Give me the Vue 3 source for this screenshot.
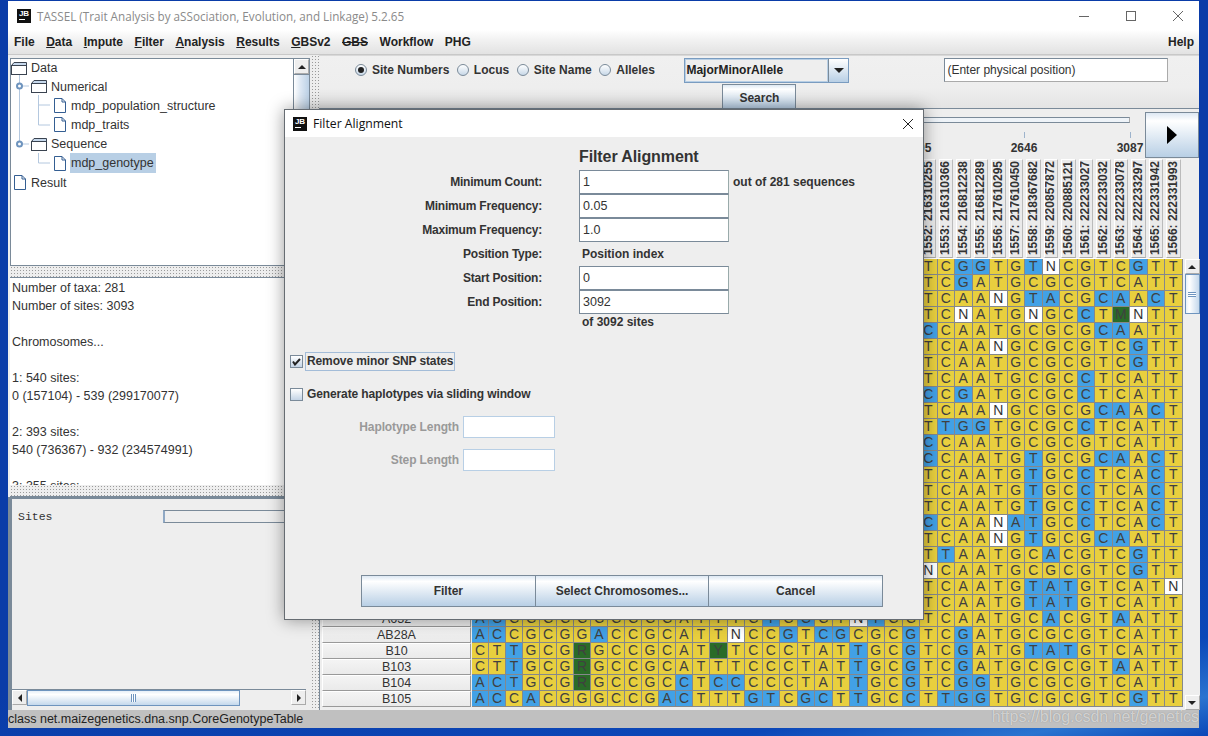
<template>
  <div class="desktop">
    <div class="window">
      <header class="titlebar">
        <span class="jb"><b>JB</b><i></i></span>
        <span class="title-text">TASSEL (Trait Analysis by aSSociation, Evolution, and Linkage) 5.2.65</span>
        <div class="win-controls">
          <svg width="12" height="12" viewBox="0 0 12 12"><path d="M1 6.5H11" stroke="#666" fill="none" /></svg>
          <svg width="12" height="12" viewBox="0 0 12 12"><rect x="1.5" y="1.5" width="9" height="9" stroke="#666" fill="none" /></svg>
          <svg width="12" height="12" viewBox="0 0 12 12"><path d="M1 1L11 11M11 1L1 11" stroke="#666" fill="none" /></svg>
        </div>
      </header>

      <nav class="menubar">
        <span>File</span>
        <span><u>D</u>ata</span>
        <span><u>I</u>mpute</span>
        <span><u>F</u>ilter</span>
        <span><u>A</u>nalysis</span>
        <span><u>R</u>esults</span>
        <span><u>G</u>BSv2</span>
        <span class="strike">GBS</span>
        <span>Workflow</span>
        <span>PHG</span>
        <span class="help">Help</span>
      </nav>

      <div class="main">
        <aside class="left">
          <div class="tree-pane">
            <div class="tree">
              <svg class="tree-lines" width="60" height="130">
                <path d="M8.5 16V27M8.5 27H18M8.5 85H18M8.5 27V85M27.5 36V66M27.5 46H39M27.5 66H39M27.5 94V104M27.5 104H39" stroke="#B4C8DF" fill="none" />
                <circle cx="8.5" cy="27" r="2.5" fill="#fff" stroke="#6E94BE" stroke-width="2" />
                <circle cx="8.5" cy="85" r="2.5" fill="#fff" stroke="#6E94BE" stroke-width="2" />
              </svg>
              <div v-for="node in treeNodes" :key="node.label" class="tree-row" :class="'lv' + node.level">
                <svg v-if="node.folder" class="tree-icon" width="16" height="13" viewBox="0 0 16 13">
                  <path d="M.5 3.5L3 .5H15.5V3.5Z" fill="#C6D8EC" stroke="#3A4350" />
                  <rect x=".5" y="3.5" width="15" height="9" fill="#fff" stroke="#3A4350" />
                </svg>
                <svg v-else class="tree-icon" width="14" height="15" viewBox="0 0 14 15">
                  <path d="M1.5 .5H9L12.5 4V14.5H1.5ZM9 .5V4H12.5" fill="#fff" stroke="#345E92" />
                </svg>
                <span class="tree-label" :class="{ selected: node.selected }">{{ node.label }}</span>
              </div>
            </div>
            <div class="vscroll-small">
              <div class="arrow-btn"><span class="tri-up"></span></div>
              <div class="thumb-v"></div>
            </div>
          </div>
          <div class="hsplit"></div>
          <div class="info-pane">
            <div v-for="(line, i) in infoLines" :key="i" class="info-line">{{ line }}</div>
          </div>
          <div class="hsplit"></div>
          <div class="sites-pane">
            <div class="sites-row">
              <span class="sites-label">Sites</span>
              <div class="progress"></div>
            </div>
            <div class="hscroll">
              <div class="arrow-btn"><span class="tri-left"></span></div>
              <div class="thumb-h"><span class="grip"></span></div>
              <div class="track-h"></div>
              <div class="arrow-btn"><span class="tri-right"></span></div>
            </div>
          </div>
        </aside>

        <div class="vsplit"></div>

        <section class="right">
          <div class="toolbar">
            <div class="radios">
              <label class="radio checked"><i></i>Site Numbers</label>
              <label class="radio"><i></i>Locus</label>
              <label class="radio"><i></i>Site Name</label>
              <label class="radio"><i></i>Alleles</label>
            </div>
            <div class="combo-col">
              <div class="combo">
                <span class="combo-text">MajorMinorAllele</span>
                <span class="combo-btn"><span class="tri-down"></span></span>
              </div>
              <button class="btn search">Search</button>
            </div>
            <div class="pos-field">(Enter physical position)</div>
          </div>

          <div class="slider-row">
            <div class="slider">
              <div class="track"></div>
              <div class="ticks">
                <div v-for="t in ticks" :key="t" class="tick"><i></i><b>{{ t }}</b></div>
              </div>
            </div>
            <button class="btn next"><span class="tri-next"></span></button>
          </div>

          <div class="table">
            <div class="table-left">
              <div class="corner"></div>
              <div v-for="(name, i) in rowNames" :key="i" class="row-head"><span>{{ name }}</span></div>
            </div>
            <div class="table-main">
              <div class="head-grid">
                <div v-for="(label, i) in headLabels" :key="i" class="col-head"><span>{{ label }}</span></div>
              </div>
              <div class="cell-grid">
                <template v-for="(row, r) in rows" :key="r">
                  <div v-for="(ch, c) in row" :key="c" class="cell" :class="cellClass(ch)">{{ ch.toUpperCase() }}</div>
                </template>
              </div>
            </div>
            <div class="table-scroll">
              <div class="spacer"></div>
              <div class="arrow-btn big"><span class="tri-up"></span></div>
              <div class="thumb-v2"><span class="grip-h"></span></div>
              <div class="track-v"></div>
              <div class="arrow-btn big"><span class="tri-down"></span></div>
            </div>
          </div>
        </section>
      </div>

      <footer class="status">class net.maizegenetics.dna.snp.CoreGenotypeTable</footer>

      <div class="dialog">
        <div class="dlg-title">
          <span class="jb"><b>JB</b><i></i></span>
          <span class="dlg-title-text">Filter Alignment</span>
          <svg class="dlg-close" width="12" height="12" viewBox="0 0 12 12"><path d="M1 1L11 11M11 1L1 11" stroke="#222" fill="none" /></svg>
        </div>
        <div class="dlg-body">
          <div class="form">
            <span></span><h2>Filter Alignment</h2><span></span>
            <label>Minimum Count:</label><div class="field">1</div><span class="note">out of 281 sequences</span>
            <label>Minimum Frequency:</label><div class="field">0.05</div><span></span>
            <label>Maximum Frequency:</label><div class="field">1.0</div><span></span>
            <label>Position Type:</label><span class="plain">Position index</span><span></span>
            <label>Start Position:</label><div class="field">0</div><span></span>
            <label>End Position:</label><div class="field">3092</div><span></span>
            <span></span><span class="plain last">of 3092 sites</span><span></span>
          </div>

          <div class="check-row first">
            <span class="check"><svg width="9" height="9" viewBox="0 0 9 9"><path d="M1 4.5L3 7.5L8 2" stroke="#222" stroke-width="2" fill="none" /></svg></span>
            <span class="check-label focused">Remove minor SNP states</span>
          </div>
          <div class="check-row second">
            <span class="check"></span>
            <span class="check-label">Generate haplotypes via sliding window</span>
          </div>

          <div class="hap-form">
            <label>Haplotype Length</label><div class="hap-field"></div>
            <label>Step Length</label><div class="hap-field"></div>
          </div>

          <div class="dlg-buttons">
            <button class="btn">Filter</button>
            <button class="btn">Select Chromosomes...</button>
            <button class="btn">Cancel</button>
          </div>
        </div>
      </div>

      <div class="watermark">https://blog.csdn.net/genetics</div>
    </div>
  </div>
</template>

<script setup>
const treeNodes = [
  { label: 'Data', level: 0, folder: true },
  { label: 'Numerical', level: 1, folder: true },
  { label: 'mdp_population_structure', level: 2 },
  { label: 'mdp_traits', level: 2 },
  { label: 'Sequence', level: 1, folder: true },
  { label: 'mdp_genotype', level: 2, selected: true },
  { label: 'Result', level: 0 }
]

const infoLines = [
  'Number of taxa: 281',
  'Number of sites: 3093',
  '',
  'Chromosomes...',
  '',
  '1: 540 sites:',
  '0 (157104) - 539 (299170077)',
  '',
  '2: 393 sites:',
  '540 (736367) - 932 (234574991)',
  '',
  '3: 355 sites:'
]

const ticks = [2205, 2646, 3087]

// only the last 15 columns of these rows stick out from under the dialog
const visibleTail = [
  'TCggTGtNCGTCgTT',
  'TCgATGCGCGTCATT',
  'TCAANGtaCGcaAcT',
  'TCNATGNGCcTMNTT',
  'cCAATGCGCGcaATT',
  'TCAANGCGCGTCgTT',
  'TCAATGCGCGTCgTT',
  'TCAATGCGCcTCATT',
  'cCgATGCGCcTCATT',
  'TCAANGCGCGcaAcT',
  'TtggTGCGCcTCATT',
  'cCAATGCGCGTCATT',
  'cCAATGtGCGcaAcT',
  'TCAATGtGCcTCAcT',
  'TCAATGtGCcTCAcT',
  'TCAATGtGCcTCAcT',
  'cCAANatGCcTCAcT',
  'TCAANGtGCGcaATT',
  'TtAATGCaCGTCgTT',
  'NCAATGCGCGTCgTT',
  'TCAATGtatGTCATN',
  'TCAATGtatGTCATT'
]

const rows = [
  ...visibleTail.map(s => s.padStart(41, 'C')),
  'acCCCCCCCCCCAT' + 'TTCtCcCTNtCC' + 'TCAATGCaCGTaATT',
  'acCGCGGaCCGCAT' + 'TNCCgTcgCGCg' + 'TCgATGCGCGTCATT',
  'CTtGCGRGCCGCAT' + 'YTCCCTATtGCg' + 'TCgATGtatGTCATT',
  'CTtGCGRGCCGCAT' + 'TTCCCTATtGCg' + 'TCgATGCGCGTaATT',
  'actGCGRGCCGCcT' + 'ccCCCTATtGCg' + 'TCggTGCGCGTCATT',
  'acCaCGGGCCGacT' + 'TTgtCgcTtGCc' + 'TtggTGCGCGTCgTT'
]

const rowNames = [...Array(22).fill(''), 'A632', 'AB28A', 'B10', 'B103', 'B104', 'B105']

const tailHeads = [
  '1552: 216310255', '1553: 216310366', '1554: 216812238', '1555: 216812289', '1556: 217610295',
  '1557: 217610450', '1558: 218367682', '1559: 220857872', '1560: 220885121', '1561: 222233027',
  '1562: 222233032', '1563: 222233078', '1564: 222233297', '1565: 222331942', '1566: 222331993'
]
const headLabels = [...Array(26).fill(''), ...tailHeads]

const cellClass = (ch) => {
  if (ch === 'N') return 'white'
  if (ch === 'R' || ch === 'Y' || ch === 'M') return 'green'
  return ch === ch.toLowerCase() ? 'blue' : 'yellow'
}
</script>

<style>
html, body { margin: 0; background: #0a3ca8; }
</style>

<style scoped>
.desktop {
  width: 1208px;
  height: 736px;
  box-sizing: border-box;
  padding: 1px 9px 8px 8px;
  background: linear-gradient(168deg, #0a3ca8 70%, #0b47b8 90%, #2a74d0 96%, #0b47b8 100%);
  overflow: hidden;
  font-family: "Liberation Sans", Arial, sans-serif;
  font-size: 12px;
  color: #333;
}
.window {
  position: relative;
  height: 727px;
  display: flex;
  flex-direction: column;
  background: #eee;
}

.titlebar {
  height: 29px;
  flex: none;
  background: #fff;
  display: flex;
  align-items: center;
  padding-left: 9px;
}
.jb {
  width: 14px;
  height: 14px;
  flex: none;
  background: #111;
  color: #fff;
  display: flex;
  flex-direction: column;
  align-items: center;
  overflow: hidden;
}
.jb b {
  font-size: 8px;
  line-height: 9px;
  letter-spacing: -.2px;
}
.jb i {
  width: 6px;
  height: 1px;
  margin: 1px 0 0 -5px;
  background: #fff;
}
.title-text {
  margin-left: 6px;
  font-family: "Open Sans", "Noto Sans", sans-serif;
  font-size: 11.7px;
  color: #8a8a8a;
}
.win-controls {
  margin-left: auto;
  display: flex;
  gap: 35px;
  padding-right: 15px;
}

.menubar {
  height: 25px;
  flex: none;
  display: flex;
  align-items: center;
  gap: 11.5px;
  padding: 0 5px 0 6px;
  box-sizing: border-box;
  font-weight: bold;
  color: #222;
  background: linear-gradient(#fff, #f2f2f2 40%, #e2e2e2);
  border-bottom: 1px solid #c8c8c8;
}
.strike { text-decoration: line-through; }
.help { margin-left: auto; }

.main {
  flex: 1;
  min-height: 0;
  display: flex;
}
.left {
  width: 302px;
  flex: none;
  padding: 3px 0 0 2px;
  box-sizing: border-box;
  display: flex;
  flex-direction: column;
}
.tree-pane {
  height: 208px;
  flex: none;
  display: flex;
  border: 1px solid #7a8a99;
  box-sizing: border-box;
  background: #fff;
}
.tree {
  position: relative;
  flex: 1;
}
.tree-lines {
  position: absolute;
  left: 0;
  top: 0;
}
.tree-row {
  position: relative;
  height: 19.2px;
  display: flex;
  align-items: center;
  font-size: 12.5px;
}
.tree-row:first-of-type { height: 18px; }
.lv1 { padding-left: 20px; }
.lv2 { padding-left: 42px; }
.tree-row:last-child { padding-left: 2px; }
.tree-icon { flex: none; }
.tree-label {
  margin-left: 3px;
  padding: 3px 2px 3px 1px;
}
.tree-label.selected { background: #b8cfe5; }

.vscroll-small {
  width: 15px;
  flex: none;
  display: flex;
  flex-direction: column;
  border-left: 1px solid #7a8a99;
  background: #eee;
}
.arrow-btn {
  width: 15px;
  height: 15px;
  flex: none;
  box-sizing: border-box;
  display: flex;
  align-items: center;
  justify-content: center;
  background: #eee;
  border: 1px solid #fff;
  border-right-color: #aaa;
  border-bottom-color: #aaa;
}
.tri-up, .tri-down, .tri-left, .tri-right {
  width: 0;
  height: 0;
  border: 4px solid transparent;
}
.tri-up { border-bottom: 4px solid #222; border-top: 0; }
.tri-down { border-top: 4px solid #222; border-bottom: 0; }
.tri-left { border-right: 4px solid #222; border-left: 0; }
.tri-right { border-left: 4px solid #222; border-right: 0; }
.thumb-v {
  flex: 1;
  background: linear-gradient(90deg, #fff, #dfe9f4 40%, #bcd1e6);
  border-top: 1px solid #7a8a99;
}

.hsplit {
  height: 12px;
  flex: none;
  box-sizing: border-box;
  background-color: #eee;
  background-image: radial-gradient(#9a9a9a 0.6px, transparent 0.8px);
  background-size: 3px 3px;
  background-position: 0 3px;
  border-bottom: 1px solid #7a8a99;
}
.info-pane {
  height: 207px;
  flex: none;
  box-sizing: border-box;
  overflow: hidden;
  background: #fff;
  padding: 1px 0 0 2px;
  font-size: 12.5px;
}
.info-line {
  height: 18px;
  line-height: 18px;
}
.sites-pane {
  flex: 1;
  min-height: 0;
  margin-left: -2px;
  display: flex;
  flex-direction: column;
  border-top: 2px solid #7a8a99;
  border-left: 4px solid #7a8a99;
}
.sites-row {
  flex: 1;
  display: flex;
  align-items: flex-start;
  padding: 11px 0 0 6px;
  overflow: hidden;
}
.sites-label {
  width: 145px;
  flex: none;
  font-family: "Liberation Mono", monospace;
  font-size: 11.5px;
  line-height: 14px;
}
.progress {
  width: 300px;
  height: 13px;
  flex: none;
  box-sizing: border-box;
  border: 1px solid #7a8a99;
  border-left: 2px solid #8fa8c4;
}
.hscroll {
  height: 16px;
  flex: none;
  display: flex;
  border-top: 1px solid #7a8a99;
  margin: 0 4px 4px 0;
}
.thumb-h {
  width: 213px;
  flex: none;
  box-sizing: border-box;
  display: flex;
  align-items: center;
  justify-content: center;
  border: 1px solid #6e94be;
  background: linear-gradient(#e8f0f8, #fff 25%, #c4d8ec);
}
.grip {
  width: 5px;
  height: 8px;
  background: repeating-linear-gradient(90deg, #6e94be 0 1px, #fff 1px 2px);
}
.track-h {
  flex: 1;
  background: #eee;
}

.vsplit {
  width: 8px;
  flex: none;
  margin-left: 1px;
  background-color: #eee;
  background-image: radial-gradient(#9a9a9a 0.6px, transparent 0.8px);
  background-size: 3px 3px;
}

.right {
  flex: 1;
  min-width: 0;
  display: flex;
  flex-direction: column;
  font-weight: bold;
}
.toolbar {
  height: 54px;
  flex: none;
  box-sizing: border-box;
  display: flex;
  align-items: flex-start;
  padding: 2px 0 0 36px;
  background: linear-gradient(#f0f0f0, #eee 60%, #e4e4e4);
  border-bottom: 1px solid #7a8a99;
  border-top: 1px solid #d8d8d8;
}
.radios {
  display: flex;
  gap: 7.5px;
  height: 24px;
  align-items: center;
}
.radio {
  display: flex;
  align-items: center;
  gap: 5px;
}
.radio i {
  width: 12px;
  height: 12px;
  box-sizing: border-box;
  border-radius: 50%;
  border: 1px solid #7a8a99;
  background: linear-gradient(#fff, #c8d8e8);
  display: block;
  position: relative;
}
.radio.checked i::after {
  content: "";
  position: absolute;
  left: 2px;
  top: 2px;
  width: 6px;
  height: 6px;
  border-radius: 50%;
  background: #222;
}
.combo-col {
  margin-left: 29.5px;
  width: 165px;
  flex: none;
  display: flex;
  flex-direction: column;
  align-items: flex-start;
  gap: 1px;
}
.combo {
  width: 165px;
  height: 25px;
  box-sizing: border-box;
  display: flex;
  border: 1px solid #7a9cc0;
  background: #eee;
}
.combo-text {
  flex: 1;
  line-height: 21px;
  padding-left: 0;
  border: 1px solid #b8cfe5;
  color: #222;
}
.combo-btn {
  width: 19px;
  flex: none;
  display: flex;
  align-items: center;
  justify-content: center;
  border-left: 1px solid #7a8a99;
  background: linear-gradient(#fff, #b8cfe5);
}
.combo-btn .tri-down { border-width: 5px 5px 0; border-top-color: #222; }
.btn {
  margin: 0;
  padding: 0;
  box-sizing: border-box;
  border: 1px solid #7a8a99;
  border-radius: 0;
  background: linear-gradient(#dde8f3, #fff 18%, #b8cfe5);
  font-family: inherit;
  font-size: 12px;
  font-weight: bold;
  color: #333;
}
.search {
  width: 74px;
  height: 25px;
  margin-left: 38px;
  padding-top: 2px;
}
.pos-field {
  margin-left: 95px;
  width: 224px;
  height: 24px;
  box-sizing: border-box;
  border: 1px solid #7a8a99;
  border-right-color: #aaa;
  border-bottom-color: #aaa;
  background: #fff;
  padding-left: 2px;
  line-height: 22px;
  font-weight: normal;
}

.slider-row {
  height: 49px;
  flex: none;
  display: flex;
  padding-top: 3px;
  box-sizing: border-box;
}
.slider {
  flex: 1;
  min-width: 0;
}
.track {
  height: 6px;
  margin: 5px 15px 0 0;
  box-sizing: border-box;
  border: 1px solid #7a8a99;
  border-right-color: #a8a8a8;
  background: #eef3f8;
}
.ticks {
  display: flex;
  justify-content: flex-end;
  gap: 76px;
  margin-top: 9px;
}
.tick {
  width: 30px;
  text-align: center;
}
.tick i {
  display: block;
  width: 1px;
  height: 6px;
  margin: 0 auto 3px;
  background: #9db3cc;
}
.tick b {
  font-size: 12px;
  line-height: 14px;
  display: block;
}
.next {
  width: 54px;
  height: 46px;
  flex: none;
  display: flex;
  align-items: center;
  justify-content: center;
}
.tri-next {
  width: 0;
  height: 0;
  border-left: 10px solid #000;
  border-top: 9px solid transparent;
  border-bottom: 9px solid transparent;
}

.table {
  flex: 1;
  min-height: 0;
  display: flex;
}
.table-left {
  width: 153px;
  flex: none;
  box-sizing: border-box;
  padding-left: 2px;
  border-left: 1px solid #7a8a99;
}
.corner { height: 101px; }
.row-head {
  height: 16px;
  box-sizing: border-box;
  width: 149px;
  border: 1px solid #fff;
  border-bottom: 1px solid #999;
  border-right-color: #999;
  background: linear-gradient(#f4f4f4, #eaeaea);
  text-align: center;
  font-weight: normal;
  font-size: 12.5px;
  line-height: 15px;
  white-space: nowrap;
}
.table-main {
  width: 710.5px;
  flex: none;
}
.head-grid {
  height: 101px;
  display: grid;
  grid-template-columns: repeat(14, 17px) repeat(27, 17.5px);
  box-sizing: border-box;
  border-bottom: 1px solid #fff;
}
.col-head {
  margin: 1px 2px 0 1px;
  box-sizing: border-box;
  height: 99px;
  border: 1px solid #fff;
  border-bottom-color: #aaa;
  border-right-color: #bbb;
  background: #eaeaea;
  overflow: hidden;
  display: flex;
  justify-content: center;
  align-items: flex-end;
  padding-bottom: 2px;
}
.col-head span {
  writing-mode: vertical-rl;
  transform: rotate(180deg);
  white-space: nowrap;
  font-size: 12px;
  line-height: 13px;
}
.cell-grid {
  display: grid;
  grid-template-columns: repeat(14, 17px) repeat(27, 17.5px);
  grid-auto-rows: 16px;
}
.cell {
  box-sizing: border-box;
  border-right: 1px solid #85888b;
  border-bottom: 1px solid #85888b;
  text-align: center;
  font-weight: normal;
  font-size: 14px;
  line-height: 15px;
  color: #404040;
}
.yellow { background: #e8cf3e; }
.blue { background: #42a1e6; }
.green { background: #2a6b28; }
.white { background: #fff; color: #333; }

.table-scroll {
  width: 15px;
  flex: none;
  margin-left: 2px;
  display: flex;
  flex-direction: column;
}
.spacer { height: 101px; flex: none; }
.thumb-v2 {
  height: 40px;
  flex: none;
  box-sizing: border-box;
  display: flex;
  align-items: center;
  justify-content: center;
  border: 1px solid #6e94be;
  background: linear-gradient(90deg, #e8f0f8, #fff 25%, #c4d8ec);
}
.grip-h {
  width: 8px;
  height: 5px;
  background: repeating-linear-gradient(#6e94be 0 1px, #fff 1px 2px);
}
.track-v { flex: 1; background: #eee; }

.status {
  height: 18px;
  flex: none;
  background: #c0c0c0;
  font-size: 12.5px;
  line-height: 18px;
  color: #222;
}

.dialog {
  position: absolute;
  left: 276px;
  top: 108px;
  width: 640px;
  height: 511px;
  box-sizing: border-box;
  display: flex;
  flex-direction: column;
  border: 1px solid #666c72;
  background: #eee;
  box-shadow: 0 0 16px rgba(0, 0, 0, .4);
}
.dlg-title {
  height: 27px;
  flex: none;
  background: #fff;
  display: flex;
  align-items: center;
  padding: 0 9px 0 8px;
}
.dlg-title-text {
  margin-left: 6px;
  font-family: "Open Sans", "Noto Sans", sans-serif;
  font-size: 12.2px;
  color: #111;
}
.dlg-close { margin-left: auto; }
.dlg-body {
  flex: 1;
  min-height: 0;
  display: flex;
  flex-direction: column;
  font-weight: bold;
  padding-top: 9px;
}
.form {
  display: grid;
  grid-template-columns: 294px 150px auto;
  grid-auto-rows: 24px;
  align-items: center;
}
.form label {
  text-align: right;
  padding-right: 37px;
  letter-spacing: -.2px;
}
.form h2 {
  margin: 0 0 2px;
  font-size: 16px;
  letter-spacing: -.1px;
  white-space: nowrap;
}
.field {
  height: 24px;
  box-sizing: border-box;
  border: 1px solid #7a8a99;
  border-right-color: #9aa;
  background: #fff;
  padding-left: 3px;
  line-height: 22px;
  font-weight: normal;
  font-size: 12.5px;
}
.note { margin-left: 4px; white-space: nowrap; }
.plain { margin-left: 3px; }
.plain.last { align-self: start; line-height: 16px; }
.check-row {
  display: flex;
  align-items: center;
  height: 19px;
  padding-left: 5px;
}
.check-row.first { margin-top: 14px; }
.check-row.second { margin-top: 14px; }
.check {
  width: 13px;
  height: 13px;
  flex: none;
  box-sizing: border-box;
  border: 1px solid #7a8a99;
  background: linear-gradient(#fff, #c4d4e6);
  display: flex;
  align-items: center;
  justify-content: center;
}
.check-label {
  margin-left: 2px;
  padding: 0 1px;
  line-height: 17px;
  border: 1px solid transparent;
  white-space: nowrap;
  letter-spacing: -.12px;
}
.check-label.focused { border-color: #a3bcd8; }
.hap-form {
  margin-top: 12px;
  display: grid;
  grid-template-columns: 174px 92px;
  grid-auto-rows: 22px;
  row-gap: 11px;
  column-gap: 4px;
  align-items: center;
}
.hap-form label {
  text-align: right;
  color: #999;
  letter-spacing: -.1px;
}
.hap-field {
  height: 22px;
  box-sizing: border-box;
  border: 1px solid #b8cfe5;
  background: #fff;
}
.dlg-buttons {
  margin-top: auto;
  padding: 0 0 12px 76px;
  display: flex;
}
.dlg-buttons .btn {
  width: 174.7px;
  height: 32px;
  margin-right: -1px;
}

.watermark {
  position: absolute;
  right: 0;
  bottom: 2px;
  font-size: 16px;
  color: rgba(255, 255, 255, .62);
  text-shadow: 0 0 1px rgba(90, 90, 90, .6);
  white-space: nowrap;
}
</style>
